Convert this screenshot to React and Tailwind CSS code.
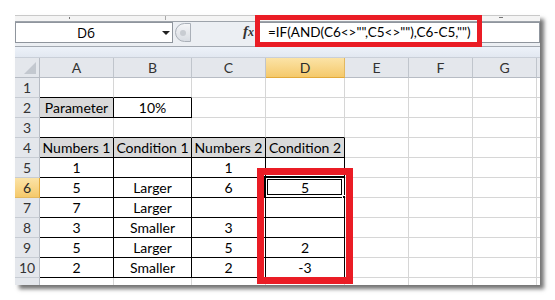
import React from 'react';

const F = { fontFamily: 'Lato, "Open Sans", sans-serif' };

const data = {
  2: ['Parameter', '10%', '', '', '', '', ''],
  4: ['Numbers 1', 'Condition 1', 'Numbers 2', 'Condition 2', '', '', ''],
  5: ['1', '', '1', '', '', '', ''],
  6: ['5', 'Larger', '6', '5', '', '', ''],
  7: ['7', 'Larger', '', '', '', '', ''],
  8: ['3', 'Smaller', '3', '', '', '', ''],
  9: ['5', 'Larger', '5', '2', '', '', ''],
  10: ['2', 'Smaller', '2', '-3', '', '', ''],
};

const isB = (r, c) => (r === 2 && c <= 1) || (r >= 4 && r <= 10 && c <= 3);
const isGray = (r, c) => (r === 2 && c === 0) || (r === 4 && c <= 3);

function Cell({ r, c }) {
  const bb = isB(r, c) || isB(r + 1, c);
  const rb = isB(r, c) || isB(r, c + 1);
  const text = (data[r] && data[r][c]) || '';
  const sel = r === 6 && c === 3;
  return (
    <div
      className={
        'relative flex items-center justify-center border-r border-b text-[14px] leading-none text-black ' +
        (bb ? 'border-b-black ' : 'border-b-[#d6d6d6] ') +
        (rb ? 'border-r-black ' : 'border-r-[#d6d6d6] ') +
        (isGray(r, c) ? 'bg-[#d9d9d9]' : 'bg-white')
      }
    >
      <span className="whitespace-nowrap">{text}</span>
      {sel && (
        <div className="absolute left-[-2px] top-[-2px] right-[-1px] bottom-[-1px] border border-black">
          <div className="absolute inset-[1px] border border-white">
            <div className="absolute inset-0 border border-black" />
          </div>
          <div className="absolute right-[-4px] bottom-[-4px] w-[6px] h-[6px] bg-black border border-white" />
        </div>
      )}
    </div>
  );
}

const gridCls = 'grid grid-cols-[25px_74px_78px_74px_79px_64px_64px_64px_3px]';

function RowHeader({ n }) {
  const hi = n === 6;
  return (
    <div
      className={
        'flex items-center justify-center border-r border-b text-[14px] leading-none ' +
        (hi
          ? 'bg-gradient-to-b from-[#fbe3a6] to-[#f5c96a] border-r-[#e2a93a] border-b-[#e2b860] text-[#2a2a2a]'
          : 'bg-[#e4e7ec] border-r-[#b7bcc4] border-b-[#c7ccd3] text-[#333]')
      }
    >
      {n}
    </div>
  );
}

export default function App() {
  const cols = ['A', 'B', 'C', 'D', 'E', 'F', 'G'];
  const rows = [1, 2, 3, 4, 5, 6, 7, 8, 9, 10];
  return (
    <div className="relative w-[555px] h-[300px] bg-white overflow-hidden" style={F}>
      <div className="pl-[15px] pt-[15px]">
        <div className="w-[525px] h-[270px] bg-white shadow-[4px_4px_4px_rgba(0,0,0,0.55)] flex flex-col overflow-hidden">
          {/* top strip */}
          <div className="h-[7px] bg-[#f4f4f4] border-t border-t-[#c9c9c9] border-b border-b-[#9da3aa] relative">
            <div className="absolute left-[54px] top-[1px] w-[1px] h-[2px] bg-[#777]" />
            <div className="absolute left-[150px] top-0 w-[1px] h-[4px] bg-[#aaa]" />
            <div className="absolute left-[358px] top-0 w-[1px] h-[4px] bg-[#aaa]" />
            <div className="absolute left-[484px] top-[1px] w-[4px] h-[1px] bg-[#777]" />
          </div>
          {/* formula row */}
          <div className="h-[25px] bg-[#eceff3] flex items-start relative border-b border-b-[#a3a9b1]">
            <div className="w-[158px] h-[21px] bg-white border border-[#8f959d] flex items-center relative">
              <div className="w-[140px] text-center text-[14px] leading-none text-black" style={{ fontFamily: '"Open Sans", sans-serif' }}>D6</div>
              <div className="absolute left-[146px] top-[8px] w-0 h-0 border-l-[4px] border-r-[4px] border-t-[4px] border-l-transparent border-r-transparent border-t-[#222]" />
            </div>
            <div className="ml-[2px] mt-[1px] w-[16px] h-[19px] rounded-l-full border border-[#aab0b8] bg-gradient-to-b from-[#f4f5f7] to-[#d9dde3] flex items-center justify-center">
              <div className="w-[6px] h-[6px] rounded-full bg-[#c8ccd2]" />
            </div>
            <div className="ml-[52px] mt-[2px] text-[15px] italic leading-none text-[#333]" style={{ fontFamily: '"Liberation Serif", serif' }}>
              <span className="font-bold">f</span><span className="text-[12px] font-bold">x</span>
            </div>
            <div className="ml-[3px] flex-1 h-[21px] bg-white border border-[#8f959d] flex items-center pl-[10px] text-[13.5px] leading-none text-black whitespace-nowrap">
              {'=IF(AND(C6<>"",C5<>""),C6-C5,"")'}
            </div>
          </div>
          {/* blue strip */}
          <div className="h-[11px] bg-gradient-to-b from-[#edf2f9] to-[#e2e8f1] border-b border-b-[#c9cfd8]" />
          {/* column headers */}
          <div className={gridCls + ' h-[20px]'}>
            <div className="bg-[#e4e7ec] border-r border-b border-r-[#b7bcc4] border-b-[#b7bcc4] relative">
              <svg className="absolute right-[3px] bottom-[3px]" width="12" height="12" viewBox="0 0 12 12">
                <polygon points="12,0 12,12 0,12" fill="#c3c8cf" />
              </svg>
            </div>
            {cols.map((c) => (
              <div
                key={c}
                className={
                  'flex items-center justify-center border-r border-b text-[14px] leading-none ' +
                  (c === 'D'
                    ? 'bg-gradient-to-b from-[#fbe3a6] to-[#f5c96a] border-r-[#e2b860] border-b-[#e2a93a] text-[#2a2a2a]'
                    : 'bg-[#e4e7ec] border-r-[#c0c5cc] border-b-[#b7bcc4] text-[#333]')
                }
              >
                {c}
              </div>
            ))}
            <div className="bg-[#e4e7ec] border-b border-b-[#b7bcc4]" />
          </div>
          {rows.map((r) => (
            <div key={r} className={gridCls + ' h-[20px]'}>
              <RowHeader n={r} />
              {cols.map((c, i) => (
                <Cell key={c} r={r} c={i} />
              ))}
              <div className="bg-white border-b border-b-[#d6d6d6]" />
            </div>
          ))}
          <div className={gridCls + ' flex-1'}>
            <div className="bg-[#e4e7ec] border-r border-r-[#b7bcc4]" />
            {cols.map((c) => (
              <div key={c} className="bg-white border-r border-r-[#d6d6d6]" />
            ))}
            <div className="bg-white" />
          </div>
        </div>
      </div>
      {/* red highlight boxes */}
      <div className="absolute left-[255px] top-[15px] w-[227px] h-[32px] border-[5px] border-[#ea1c25]" />
      <div className="absolute left-[257px] top-[168px] w-[96px] h-[116px] border-[7px] border-[#ea1c25]" />
    </div>
  );
}
